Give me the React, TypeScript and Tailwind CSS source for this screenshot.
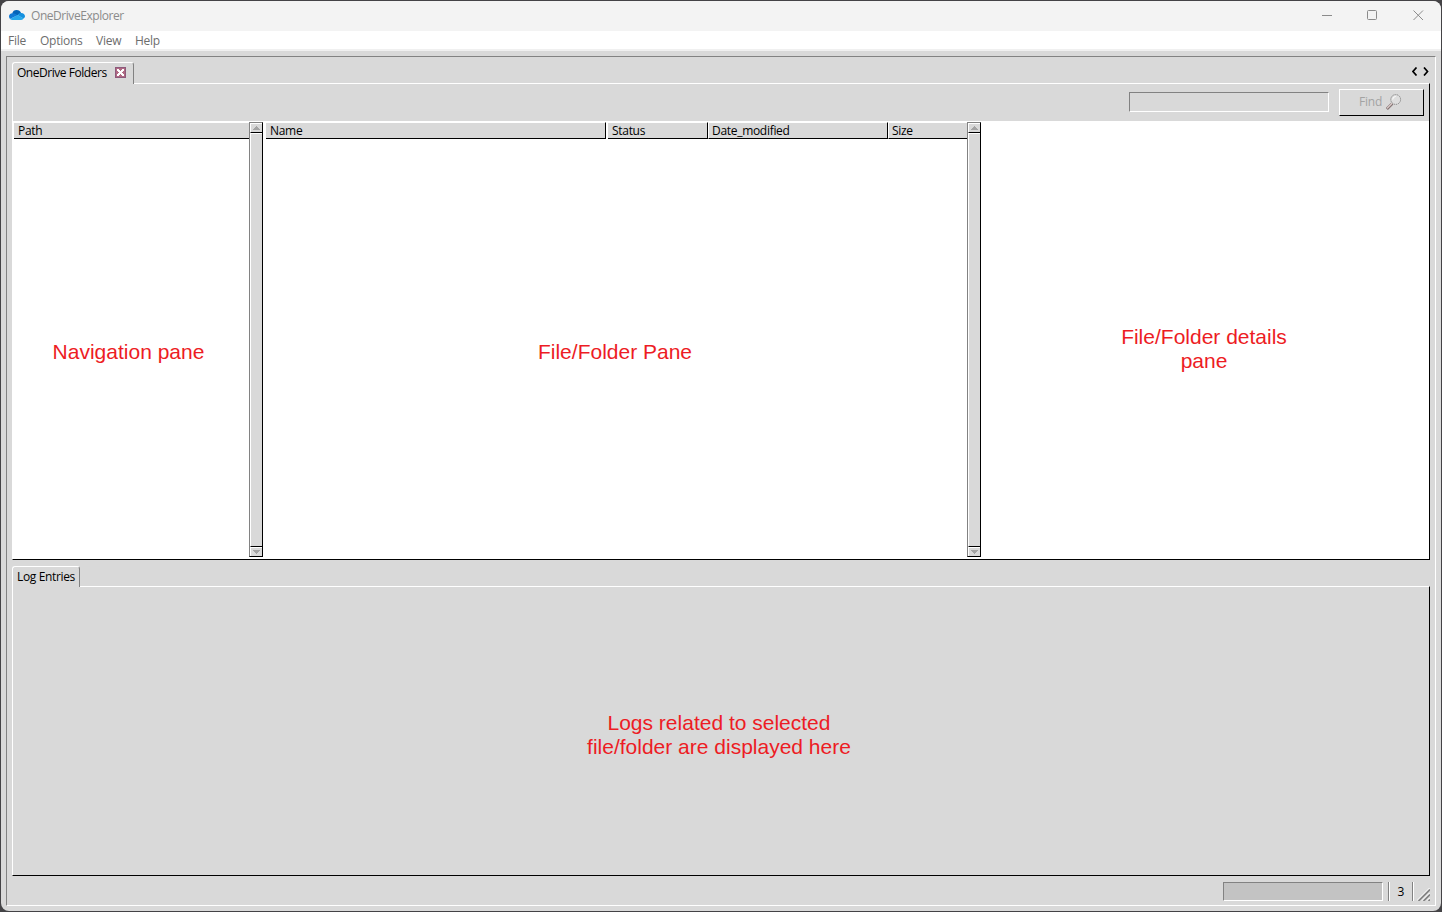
import React from "react";

function CloudIcon() {
  return (
    <svg width="16" height="10" viewBox="0 0 16 10" className="mb-[2px] block">
      <path d="M3.2 3.4A4.6 4.6 0 0 1 7.6 0a4.8 4.8 0 0 1 4.5 3.1L8 5.6z" fill="#0364b8" />
      <path d="M3.4 3.2C1.3 3.2 0 4.700 0 6.500c0 1 .4 1.800 1 2.400l7.600-3.700-2-1.300c-.9-.5-2-.8-3.200-.7z" fill="#0f78d4" />
      <path d="M12.100 3.100c-1.200-.1-2.300.3-3.500 2.100l5.900 3.400c.9-.5 1.500-1.300 1.500-2.300 0-1.700-1.700-3.300-3.900-3.200z" fill="#1490df" />
      <path d="M1 8.900 8.600 5.100l6.100 3.400c-.6.900-1.400 1.400-2.500 1.400H3.500C2.500 9.900 1.600 9.600 1 8.900z" fill="#28a8ea" />
    </svg>
  );
}

function TabCloseIcon() {
  return (
    <svg width="11" height="11" viewBox="0 0 11 11" shapeRendering="crispEdges" className="block">
      <rect width="11" height="11" fill="#8d5a7c" />
      <rect x="1" y="1" width="9" height="9" fill="#b06a84" />
      <path d="M2 2h2v1h1v1h1V3h1V2h2v2H8v1H7v1h1v1h1v2H7V8H6V7H5v1H4v1H2V7h1V6h1V5H3V4H2z" fill="#fff" />
    </svg>
  );
}

function MagnifierIcon() {
  return (
    <svg width="16" height="16" viewBox="0 0 16 16" className="block">
      <path d="M.8 15 6.300 9.500" stroke="#857474" strokeWidth="3" />
      <path d="M1 14.300 6.300 9" stroke="#e2d2d0" strokeWidth="1.200" />
      <circle cx="9.700" cy="5.500" r="4.900" fill="#dedede" stroke="#808080" strokeWidth="1" strokeDasharray="1.200 .8" />
      <path d="M6.700 5.500a3 3 0 0 1 3-3" stroke="#fff" fill="none" />
    </svg>
  );
}

function Arrow({ down = false }: { down?: boolean }) {
  return (
    <svg width="7" height="4" viewBox="0 0 7 4" shapeRendering="crispEdges" className="block">
      {down ? (
        <path d="M0 0h7v1H6v1H5v1H4v1H3V3H2V2H1V1H0z" fill="#a3a3a3" />
      ) : (
        <path d="M3 0h1v1h1v1h1v1h1v1H0V3h1V2h1V1h1z" fill="#a3a3a3" />
      )}
    </svg>
  );
}

function Scrollbar() {
  return (
    <div className="flex h-[435px] w-[14px] shrink-0 flex-col border border-t-[#828282] border-r-black border-b-black border-l-[#828282] bg-[#d9d9d9]">
      <div className="flex h-[10px] shrink-0 justify-center border-t border-b border-l border-t-white border-b-black border-l-white pt-[2px]">
        <Arrow />
      </div>
      <div className="flex-1 border-t border-b border-l border-t-white border-b-black border-l-white" />
      <div className="flex h-[9px] shrink-0 justify-center border-t border-l border-white pt-[2px]">
        <Arrow down />
      </div>
    </div>
  );
}

function HeaderCell({ children, className }: { children: React.ReactNode; className: string }) {
  return (
    <div className={`h-[17px] shrink-0 border-t border-b border-t-white border-b-black bg-[#d9d9d9] text-[12px] leading-[15px] tracking-[-0.3px] whitespace-nowrap ${className}`}>
      {children}
    </div>
  );
}

function Tab({ children, className }: { children: React.ReactNode; className: string }) {
  return (
    <div className={`relative -mb-px flex shrink-0 rounded-tl-[3px] rounded-tr-[3px] border-t border-r border-l border-t-white border-r-[#828282] border-l-white bg-[#d9d9d9] pl-1 text-[12px] whitespace-nowrap ${className}`}>
      {children}
    </div>
  );
}

function PaneLabel({ children, className }: { children: React.ReactNode; className: string }) {
  return (
    <p className={`text-center font-['Liberation_Sans',Arial,sans-serif] text-[21px] leading-6 text-[#ed1c24] ${className}`}>
      {children}
    </p>
  );
}

export default function App() {
  return (
    <div className="h-[912px] w-[1442px] overflow-hidden bg-[#444346] p-px font-['Open_Sans','Noto_Sans',sans-serif] text-black">
      <div className="flex h-[910px] w-[1440px] flex-col overflow-hidden rounded-[8px] bg-[#d9d9d9]">
        <header className="flex h-[30px] shrink-0 items-center bg-[#f3f3f3] pl-2">
          <CloudIcon />
          <span className="ml-[6px] text-[12px] leading-[28px] tracking-[-0.45px] text-[#8b8b8b]">OneDriveExplorer</span>
          <svg width="102" height="11" viewBox="0 0 102 11" className="mr-[17px] mb-[2px] ml-auto block" fill="none" stroke="#8b8b8b">
            <path d="M0 5.500h10" />
            <rect x="45.500" y=".5" width="9" height="9" rx="1" />
            <path d="m91.500.5 9.500 9.500m0-9.500-9.500 9.500" />
          </svg>
        </header>
        <nav className="flex h-[18px] shrink-0 bg-white pl-[7px] text-[12px] leading-[20px] tracking-[-0.25px] text-[#6d6d6d]">
          <span className="w-8">File</span>
          <span className="w-14">Options</span>
          <span className="w-[39px]">View</span>
          <span>Help</span>
        </nav>
        <div className="h-[2px] shrink-0 bg-[#f0f0f0]" />

        <div className="flex-1 p-[5px]">
          <div className="flex h-[850px] w-[1430px] flex-col border border-t-[#828282] border-r-white border-b-white border-l-[#828282] px-[5px] pt-[5px]">
            <div className="flex h-[21px] shrink-0">
              <Tab className="h-[22px] w-[122px]">
                <span className="w-[98px] leading-[20px] tracking-[-0.46px]">OneDrive Folders</span>
                <span className="pt-1">
                  <TabCloseIcon />
                </span>
              </Tab>
              <svg width="17" height="9" viewBox="0 0 17 9" className="mt-[5px] mr-px ml-auto block" fill="none" stroke="#000" strokeWidth="1.700">
                <path d="M4.500 .5 1 4.500 4.500 8.500M12 .5l3.500 4-3.500 4" />
              </svg>
            </div>

            <section className="flex h-[477px] shrink-0 flex-col border border-t-white border-r-black border-b-black border-l-white">
              <div className="flex h-[37px] shrink-0 justify-end pr-[5px]">
                <div className="mt-2 h-5 w-[200px] border border-t-[#828282] border-r-white border-b-white border-l-[#828282]" />
                <button className="mt-[5px] ml-[10px] flex h-[27px] w-[85px] border border-t-white border-r-black border-b-black border-l-white pl-[19px] text-[12px] leading-[24px] tracking-[-0.2px] text-[#a3a3a3]">
                  <span className="w-[27px] text-left">Find</span>
                  <span className="pt-1">
                    <MagnifierIcon />
                  </span>
                </button>
              </div>
              <div className="flex flex-1 bg-white pt-px">
                <div className="flex w-[250px] shrink-0 pl-px">
                  <div className="w-[235px]">
                    <HeaderCell className="w-full pl-1">Path</HeaderCell>
                    <PaneLabel className="mt-[201px] pr-[6px]">Navigation pane</PaneLabel>
                  </div>
                  <Scrollbar />
                </div>
                <div className="flex w-[718px] shrink-0 pl-[3px]">
                  <div className="w-[701px]">
                    <div className="flex">
                      <HeaderCell className="w-[340px] border-r border-r-black pl-1">Name</HeaderCell>
                      <HeaderCell className="ml-[2px] w-[100px] border-r border-r-black pl-1">Status</HeaderCell>
                      <HeaderCell className="w-[180px] border-r border-l border-r-black border-l-white pl-[3px]">Date_modified</HeaderCell>
                      <HeaderCell className="w-[79px] border-l border-l-white pl-[3px]">Size</HeaderCell>
                    </div>
                    <PaneLabel className="mt-[201px] pr-[3px]">File/Folder Pane</PaneLabel>
                  </div>
                  <Scrollbar />
                </div>
                <PaneLabel className="flex-1 pt-[203px] pr-[2px]">
                  File/Folder details
                  <br />
                  pane
                </PaneLabel>
              </div>
            </section>

            <div className="mt-[6px] flex h-[20px] shrink-0">
              <Tab className="h-[21px] w-[68px]">
                <span className="leading-[20px] tracking-[-0.35px]">Log Entries</span>
              </Tab>
            </div>
            <section className="h-[290px] shrink-0 border border-t-white border-r-black border-b-black border-l-white pt-[124px] pr-[4px]">
              <PaneLabel className="">
                Logs related to selected
                <br />
                file/folder are displayed here
              </PaneLabel>
            </section>

            <footer className="flex flex-1 justify-end pt-[6px] text-[12px]">
              <div className="h-[19px] w-[160px] border border-t-[#828282] border-r-white border-b-white border-l-[#828282] bg-[#c3c3c3]" />
              <div className="ml-[5px] h-[19px] w-[2px] border-r border-l border-r-white border-l-[#828282]" />
              <span className="w-[22px] text-center leading-[19px]">3</span>
              <div className="h-[19px] w-[2px] border-r border-l border-r-white border-l-[#828282]" />
              <svg width="13" height="13" viewBox="0 0 13 13" className="mt-[6px] ml-[3px] block" fill="none">
                <path d="M0 12.500 12.500 0M5 12.500 12.500 5M10 12.500l2.500-2.500" stroke="#fff" />
                <path d="M1.500 13 13 1.500M6.500 13 13 6.500M11.500 13l1.500-1.500" stroke="#828282" strokeWidth="1.700" />
              </svg>
            </footer>
          </div>
        </div>
      </div>
    </div>
  );
}
